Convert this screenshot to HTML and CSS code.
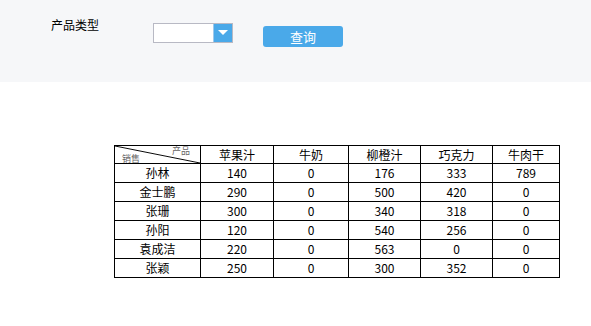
FILE: index.html
```html
<!DOCTYPE html>
<html lang="zh-CN">
<head>
    <meta charset="UTF-8">
    <title>销售报表</title>
    <link rel="stylesheet" href="styles.css">
</head>
<body>

<div class="search-bar">
    <div class="field-label">产品类型</div>
    <div class="select-box">
        <div class="select-input"></div>
        <div class="select-arrow"></div>
    </div>
    <button class="query-button">查询</button>
</div>

<div class="report">
    <table class="sales-table">
        <tr class="head-row">
            <th class="corner">
                <svg class="corner-line" width="86" height="18" viewBox="0 0 86 18" preserveAspectRatio="none">
                    <line x1="0" y1="0" x2="86" y2="18" stroke="#000" stroke-width="1"/>
                </svg>
                <span class="corner-top">产品</span>
                <span class="corner-bottom">销售</span>
            </th>
            <th class="c1">苹果汁</th>
            <th class="c2">牛奶</th>
            <th class="c3">柳橙汁</th>
            <th class="c4">巧克力</th>
            <th class="c5">牛肉干</th>
        </tr>
        <tr><td class="name">孙林</td><td>140</td><td>0</td><td>176</td><td>333</td><td>789</td></tr>
        <tr><td class="name">金士鹏</td><td>290</td><td>0</td><td>500</td><td>420</td><td>0</td></tr>
        <tr><td class="name">张珊</td><td>300</td><td>0</td><td>340</td><td>318</td><td>0</td></tr>
        <tr><td class="name">孙阳</td><td>120</td><td>0</td><td>540</td><td>256</td><td>0</td></tr>
        <tr><td class="name">袁成洁</td><td>220</td><td>0</td><td>563</td><td>0</td><td>0</td></tr>
        <tr><td class="name">张颖</td><td>250</td><td>0</td><td>300</td><td>352</td><td>0</td></tr>
    </table>
</div>

</body>
</html>
```

FILE: styles.css
```css
body {
    margin: 0;
    background: #fff;
    font-family: "Noto Sans CJK SC", "DejaVu Sans", sans-serif;
    color: #000;
}

.search-bar {
    height: 82px;
    background: #f6f7f9;
    display: flex;
    align-items: flex-start;
    box-sizing: border-box;
    padding-left: 51px;
}

.field-label {
    margin-top: 15px;
    font-size: 12px;
    line-height: 20px;
    width: 102px;
}

.select-box {
    margin-top: 23px;
    width: 80px;
    height: 20px;
    box-sizing: border-box;
    border: 1px solid #b8b9c4;
    display: flex;
    background: #fff;
}

.select-input {
    flex: 1;
}

.select-arrow {
    width: 18px;
    background: #4aa9e9;
    border-left: 1px solid #9ec9ec;
    position: relative;
}

.select-arrow::after {
    content: '';
    position: absolute;
    left: 4px;
    top: 6px;
    border-left: 5px solid transparent;
    border-right: 5px solid transparent;
    border-top: 5px solid #fff;
}

.query-button {
    margin-top: 26px;
    margin-left: 30px;
    width: 80px;
    height: 21px;
    border: none;
    border-radius: 3px;
    background: #4aa9e9;
    color: #fff;
    font-family: inherit;
    font-size: 13px;
    line-height: 21px;
    padding: 0;
}

.report {
    padding: 63px 0 0 114px;
}

.sales-table {
    border-collapse: collapse;
    font-size: 12px;
}

.sales-table th,
.sales-table td {
    border: 1px solid #000;
    text-align: center;
    padding: 0;
    height: 18px;
    line-height: 18px;
}

.sales-table th {
    font-weight: normal;
    height: 17px;
    line-height: 17px;
}

.sales-table .c1 { width: 72px; }
.sales-table .c2 { width: 74px; }
.sales-table .c3 { width: 71px; }
.sales-table .c4 { width: 71px; }
.sales-table .c5 { width: 66px; }

.sales-table td.name {
    width: 85px;
}

.sales-table th.corner {
    width: 85px;
    position: relative;
    overflow: hidden;
}

.corner-line {
    position: absolute;
    left: 0;
    top: 0;
    width: 100%;
    height: 100%;
}

.corner-top,
.corner-bottom {
    position: absolute;
    font-size: 9px;
    line-height: 9px;
    color: #666;
}

.corner-top {
    right: 10px;
    top: 0;
}

.corner-bottom {
    left: 7px;
    bottom: 0;
}
```
